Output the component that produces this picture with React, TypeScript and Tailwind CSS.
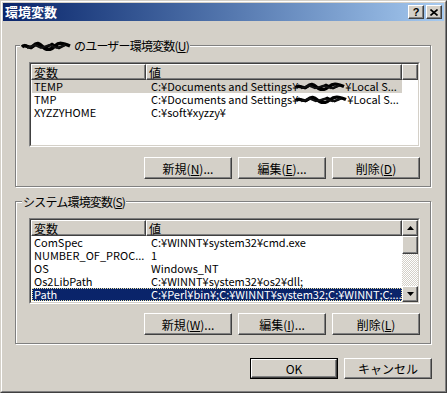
import React from "react";

const raised =
  "border border-t-white border-l-white border-r-[#404040] border-b-[#404040] shadow-[inset_-1px_-1px_0_#808080] bg-[#d4d0c8]";

function Scribble({ className = "" }: { className?: string }) {
  return (
    <svg viewBox="0 0 50 10" preserveAspectRatio="none" className={`inline-block shrink-0 ${className}`}>
      <path d="M1 6 C5 2,8 9,12 5 S18 2,22 6 S30 9,34 5 S42 2,49 5" stroke="#000" strokeWidth="3.5" fill="none" />
      <path d="M3 4 L10 7 L16 3 L24 7 L31 3 L38 7 L46 3" stroke="#000" strokeWidth="2.5" fill="none" />
      <path d="M6 7 L14 4 L20 7 L28 4 L36 7 L44 4" stroke="#111" strokeWidth="2" fill="none" />
    </svg>
  );
}

function Btn({ children, className = "" }: { children: React.ReactNode; className?: string }) {
  return <div className={`flex items-center justify-center ${raised} ${className}`}>{children}</div>;
}

function U({ c }: { c: string }) {
  return <span className="underline underline-offset-1">{c}</span>;
}

function Header({ filler }: { filler: boolean }) {
  return (
    <div className="flex h-[16px] shrink-0">
      <div className={`${raised} w-[115px] pl-[2px] flex items-center`}>変数</div>
      <div className={`${raised} w-[256px] pl-[2px] flex items-center`}>値</div>
      {filler && <div className={`${raised} flex-1`} />}
    </div>
  );
}

function Row({
  name,
  value,
  sel,
}: {
  name: React.ReactNode;
  value: React.ReactNode;
  sel?: "gray" | "blue";
}) {
  const bg =
    sel === "gray"
      ? "bg-[#d4d0c8]"
      : sel === "blue"
      ? "bg-[#0a246a] text-white outline-1 outline-dotted outline-[#e8e0a0] -outline-offset-1"
      : "";
  return (
    <div className={`flex h-[13px] ml-[1px] w-[370px] whitespace-nowrap text-[11px] leading-[13px] ${bg}`}>
      <div className="w-[114px] pl-[2px] overflow-x-clip">{name}</div>
      <div className="w-[256px] pl-[5px] overflow-x-clip flex items-center">{value}</div>
    </div>
  );
}

function Sunken({ children, className = "" }: { children: React.ReactNode; className?: string }) {
  return (
    <div className={`border border-t-[#808080] border-l-[#808080] border-r-white border-b-white ${className}`}>
      <div className="border border-t-[#404040] border-l-[#404040] border-r-[#d4d0c8] border-b-[#d4d0c8] bg-white h-full overflow-hidden">
        {children}
      </div>
    </div>
  );
}

function Arrow({ up }: { up: boolean }) {
  return (
    <svg width="7" height="4" viewBox="0 0 7 4">
      {up ? <path d="M3.5 0 L7 4 L0 4 Z" fill="#000" /> : <path d="M0 0 L7 0 L3.5 4 Z" fill="#000" />}
    </svg>
  );
}

export default function App() {
  return (
    <div className="w-[447px] h-[393px] bg-[#d4d0c8] border border-t-[#d4d0c8] border-l-[#d4d0c8] border-r-[#404040] border-b-[#404040] font-['Noto_Sans_CJK_JP','Noto_Sans',sans-serif] text-[12px] leading-[13px] text-black">
      <div className="h-full border border-t-white border-l-white border-r-[#808080] border-b-[#808080] p-px flex flex-col">
        {/* Title bar */}
        <div className="h-[18px] shrink-0 flex items-center bg-linear-to-r from-[#0a246a] to-[#a6caf0] pl-[2px] pr-[2px]">
          <span className="text-white font-bold text-[13px] leading-[16px]">環境変数</span>
          <div className="ml-auto flex gap-[2px]">
            <div className={`${raised} w-[16px] h-[14px] flex items-center justify-center font-['Liberation_Sans',sans-serif] font-bold text-[11px] leading-[11px]`}>
              ?
            </div>
            <div className={`${raised} w-[16px] h-[14px] flex items-center justify-center`}>
              <svg width="8" height="7" viewBox="0 0 8 7">
                <path d="M0.5 0.5 L7.5 6.5 M7.5 0.5 L0.5 6.5" stroke="#000" strokeWidth="1.6" />
              </svg>
            </div>
          </div>
        </div>

        {/* Body */}
        <div className="flex flex-col px-[12px]">
          {/* User group */}
          <div className="relative mt-[24px] w-[416px] h-[142px] border border-[#808080] shadow-[inset_1px_1px_0_#fff,1px_1px_0_#fff] pl-[13px] pt-[16px]">
            <div className="absolute left-[4px] -top-[7px] px-[1px] bg-[#d4d0c8] flex items-center h-[13px] tracking-[-0.8px]">
              <Scribble className="w-[50px] h-[10px] mr-[3px]" />
              <span>
                のユーザー環境変数(<U c="U" />)
              </span>
            </div>
            <Sunken className="w-[391px] h-[85px]">
              <Header filler />
              <Row
                sel="gray"
                name="TEMP"
                value={
                  <>
                    <span>C:¥Documents and Settings¥</span>
                    <Scribble className="w-[50px] h-[9px] -ml-[3px]" />
                    <span>¥Local S...</span>
                  </>
                }
              />
              <Row
                name="TMP"
                value={
                  <>
                    <span>C:¥Documents and Settings¥</span>
                    <Scribble className="w-[52px] h-[9px] -ml-[3px]" />
                    <span>¥Local S...</span>
                  </>
                }
              />
              <Row name="XYZZYHOME" value={<span>C:¥soft¥xyzzy¥</span>} />
            </Sunken>
            <div className="flex justify-end gap-[6px] mt-[10px] w-[391px]">
              <Btn className="w-[88px] h-[22px]">
                新規(<U c="N" />)...
              </Btn>
              <Btn className="w-[88px] h-[22px]">
                編集(<U c="E" />)...
              </Btn>
              <Btn className="w-[88px] h-[22px]">
                削除(<U c="D" />)
              </Btn>
            </div>
          </div>

          {/* System group */}
          <div className="relative mt-[14px] w-[416px] h-[143px] border border-[#808080] shadow-[inset_1px_1px_0_#fff,1px_1px_0_#fff] pl-[13px] pt-[16px]">
            <div className="absolute left-[6px] -top-[7px] px-[1px] bg-[#d4d0c8] h-[13px] flex items-center tracking-[-0.8px]">
              <span>
                システム環境変数(<U c="S" />)
              </span>
            </div>
            <Sunken className="w-[391px] h-[86px]">
              <div className="flex h-full">
                <div className="w-[371px] flex flex-col">
                  <Header filler={false} />
                  <Row name="ComSpec" value={<span>C:¥WINNT¥system32¥cmd.exe</span>} />
                  <Row name="NUMBER_OF_PROC..." value={<span>1</span>} />
                  <Row name="OS" value={<span>Windows_NT</span>} />
                  <Row name="Os2LibPath" value={<span>C:¥WINNT¥system32¥os2¥dll;</span>} />
                  <Row sel="blue" name="Path" value={<span>C:¥Perl¥bin¥;C:¥WINNT¥system32;C:¥WINNT;C:...</span>} />
                </div>
                <div className="w-[16px] flex flex-col shrink-0">
                  <div className={`${raised} h-[16px] shrink-0 flex items-center justify-center`}>
                    <Arrow up />
                  </div>
                  <div className={`${raised} h-[18px] shrink-0`} />
                  <div className="flex-1 bg-[image:repeating-conic-gradient(#d4d0c8_0%_25%,#ffffff_0%_50%)] bg-[length:2px_2px]" />
                  <div className={`${raised} h-[16px] shrink-0 flex items-center justify-center`}>
                    <Arrow up={false} />
                  </div>
                </div>
              </div>
            </Sunken>
            <div className="flex justify-end gap-[6px] mt-[9px] w-[391px]">
              <Btn className="w-[88px] h-[22px]">
                新規(<U c="W" />)...
              </Btn>
              <Btn className="w-[88px] h-[22px]">
                編集(<U c="I" />)...
              </Btn>
              <Btn className="w-[88px] h-[22px]">
                削除(<U c="L" />)
              </Btn>
            </div>
          </div>

          {/* OK / Cancel */}
          <div className="flex justify-end gap-[6px] mt-[14px] w-[417px]">
            <div className="w-[88px] h-[21px] border border-black">
              <Btn className="w-full h-full">OK</Btn>
            </div>
            <Btn className="w-[88px] h-[21px]">キャンセル</Btn>
          </div>
        </div>
      </div>
    </div>
  );
}
